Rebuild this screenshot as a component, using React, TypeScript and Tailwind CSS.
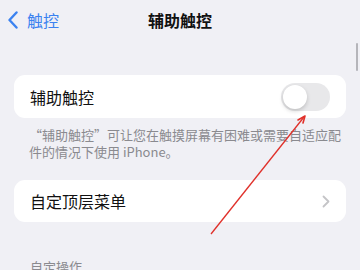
const App = () => {
    return (
        <div
            className="relative w-[360px] h-[270px] overflow-hidden bg-[#f0f0f5]"
            style={{ fontFamily: '"Noto Sans CJK SC", "Noto Sans", sans-serif' }}
        >
            {/* nav bar */}
            <div className="relative h-[40px] flex items-center">
                <div className="flex items-center pl-[7px] text-[#3b82f0]">
                    <svg width="12" height="18" viewBox="0 0 12 18" fill="none">
                        <path d="M9.5 1.5L2.5 9l7 7.5" stroke="currentColor" strokeWidth="2.4" strokeLinecap="round" strokeLinejoin="round" />
                    </svg>
                    <span className="ml-[8px] text-[16px] leading-none">触控</span>
                </div>
                <div className="absolute left-0 right-0 text-center text-[16px] font-semibold text-[#111] leading-none">
                    辅助触控
                </div>
            </div>

            {/* scroll indicator */}
            <div className="absolute right-[2px] top-[43px] w-[2px] h-[28px] rounded-full bg-[#b5b5ba]" />

            <div className="px-[14px] pt-[35px]">
                <div className="h-[43px] rounded-[11px] bg-white flex items-center justify-between pl-[16px] pr-[16px]">
                    <span className="text-[16px] text-[#111]">辅助触控</span>
                    <div className="w-[49px] h-[28px] rounded-full bg-[#e8e8ea] p-[2px] flex">
                        <div className="w-[24px] h-[24px] rounded-full bg-white shadow-[0_2px_4px_rgba(0,0,0,0.18)]" />
                    </div>
                </div>
                <p className="pl-[15px] pr-[2px] pt-[8px] text-[13px] leading-[17px] text-[#8a8a8f]">
                    “辅助触控”可让您在触摸屏幕有困难或需要自适应配件的情况下使用 iPhone。
                </p>

                <div className="mt-[20px] h-[42px] rounded-[11px] bg-white flex items-center justify-between pl-[16px] pr-[16px]">
                    <span className="text-[16px] text-[#111]">自定顶层菜单</span>
                    <svg width="8" height="13" viewBox="0 0 8 13" fill="none">
                        <path d="M1.5 1.5l5 5-5 5" stroke="#c4c4c7" strokeWidth="1.8" strokeLinecap="round" strokeLinejoin="round" />
                    </svg>
                </div>

                <div className="px-[16px] pt-[35px] text-[13px] text-[#8a8a8f]">自定操作</div>
            </div>

            {/* red arrow annotation */}
            <svg className="absolute left-0 top-0" width="360" height="270" viewBox="0 0 360 270">
                <line x1="304" y1="117" x2="211" y2="234" stroke="#e0302a" strokeWidth="1.3" />
                <path d="M305 116l-7 4M305 116l-2 7" stroke="#e0302a" strokeWidth="1.6" strokeLinecap="round" />
            </svg>
        </div>
    );
};

export default App;
